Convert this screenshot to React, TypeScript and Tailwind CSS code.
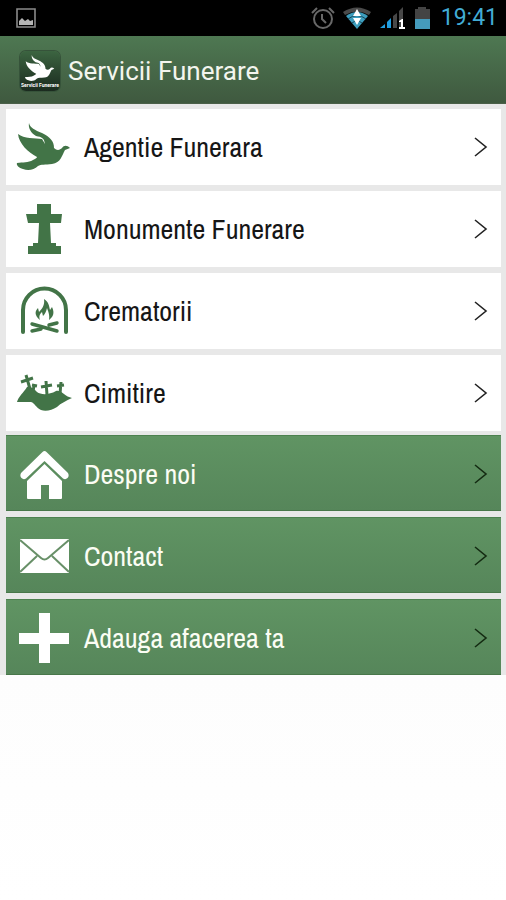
import type { ReactNode } from 'react';

interface MenuItem {
  title: string;
  href: string;
  icon: ReactNode;
}

function DoveShape() {
  return (
    <path d="M13 2C14 7 19 9 26 12C34 16 38 20 38 27C41 30 44 29 46 27C48 24 51 24 54 27L49 29C46 34 45 42 36 43C29 44 25 43 22 45C18 49 12 50 7 48C3 47 0 44 1 42C7 41 12 42 17 39C19 38 21 37 21 36C12 31 3 23 2 13C8 18 19 17 26 18L29 23C28 17 26 16 20 15C15 12 12 7 13 2Z" />
  );
}

const whiteItems: MenuItem[] = [
  {
    title: 'Agentie Funerara',
    href: '#agentie',
    icon: (
      <svg viewBox="0 0 56 52" className="h-[52px] w-14" fill="#427447">
        <DoveShape />
      </svg>
    ),
  },
  {
    title: 'Monumente Funerare',
    href: '#monumente',
    icon: (
      <svg viewBox="0 0 56 52" className="h-[52px] w-14" fill="#427447">
        <path d="M21 1H35V11H46L45 20H34L35 40H40V43H45V51H12V43H17V40H22L23 20H12L10 11H21Z" />
      </svg>
    ),
  },
  {
    title: 'Crematorii',
    href: '#crematorii',
    icon: (
      <svg viewBox="0 0 56 52" className="h-[52px] w-14" fill="none" stroke="#427447" strokeLinecap="round">
        <path d="M7 47V25A21.5 21.5 0 0 1 50 25V47" strokeWidth="4" />
        <path d="M16 39L41 46M16 46L25 44M33 40L41 38" strokeWidth="3.4" />
        <path
          d="M24 35C18 30 19 26 22 23L23 27C26 24 29 20 28 14C33 17 33 21 34 25L36 22C39 28 37 32 33 35C34 30 32 26 31 23C30 27 29 29 27 31L26 27C23 30 23 32 24 35Z"
          fill="#427447"
          stroke="none"
        />
      </svg>
    ),
  },
  {
    title: 'Cimitire',
    href: '#cimitire',
    icon: (
      <svg viewBox="0 0 56 52" className="h-[52px] w-14" fill="#427447">
        <path d="M1 35C2 30 8 25 11 20C15 19 18 22 21 25C25 28 33 28 40 24C44 23 46 26 48 27C50 29 53 30 56 31C50 34 45 36 41 40C36 43 30 45 25 43C20 41 19 36 15 35H1Z" />
        <path
          d="M10 8L14 22M5 15L17 11M30 14L31 28M25 20L36 18M45 15L44 27M41 19L48 18M18 19L17 24M16 18L21 19"
          fill="none"
          stroke="#427447"
          strokeWidth="3"
        />
      </svg>
    ),
  },
];

const greenItems: MenuItem[] = [
  {
    title: 'Despre noi',
    href: '#despre',
    icon: (
      <svg viewBox="0 0 56 52" className="h-[52px] w-14" fill="#fff">
        <path d="M28.5 16L46 33V50Q46 51 45 51H33V37H25V51H12Q11 51 11 50V33Z" />
        <path d="M26.500 4Q28.500 2 30.500 4L52 25Q53.500 28 51.500 30Q49.500 32 47 30.500L28.500 13L10 30.500Q7.500 32 5.500 30Q3.500 28 5 25Z" />
      </svg>
    ),
  },
  {
    title: 'Contact',
    href: '#contact',
    icon: (
      <svg viewBox="0 0 56 52" className="h-[52px] w-14" fill="none">
        <path d="M4 9H53V43H4Z" fill="#fff" />
        <path d="M4 10L25 28Q28.500 31 32 28L53 10M4 42L21 26M53 42L36 26" stroke="#689068" strokeWidth="2" />
      </svg>
    ),
  },
  {
    title: 'Adauga afacerea ta',
    href: '#adauga',
    icon: (
      <svg viewBox="0 0 56 52" className="h-[52px] w-14" fill="#fff">
        <path d="M23 1H34V21H53V32H34V51H23V32H3V21H23Z" />
      </svg>
    ),
  },
];

function StatusBar() {
  return (
    <div className="flex h-9 items-center justify-between bg-black pr-2 pl-4">
      <svg viewBox="0 0 20 20" className="h-5 w-5" fill="none">
        <path d="M1 1H19V19H1Z" stroke="#8a8a8a" strokeWidth="1.6" />
        <path d="M3 17V13L6 10L9 13L12 11L14 13L17 12V17Z" fill="#b5b5b5" />
      </svg>
      <div className="flex items-center gap-2">
        {/* alarm */}
        <svg viewBox="0 0 24 24" className="h-6 w-6" fill="none" stroke="#686868" strokeWidth="2">
          <circle cx="12" cy="13" r="9" />
          <path d="M11 8V13L15 17M1 7L6 2M23 7L18 2" />
        </svg>
        {/* wifi */}
        <svg viewBox="0 0 28 24" className="h-6 w-7">
          <path d="M0 6Q14 -3 28 6L26 9Q14 2 2 9Z" fill="#4a4a4a" />
          <path d="M3 10Q14 2 25 10L14 23Z" fill="#3d9dbd" />
          <path d="M5 13Q14 6 23 13M9 17Q14 13 19 17" fill="none" stroke="#17475a" />
          <path d="M14 3L18 10H10ZM14 19L18 12H10Z" fill="#fff" />
        </svg>
        {/* signal */}
        <svg viewBox="0 0 26 24" className="h-6 w-[26px]">
          <path d="M1 22L6 18V22ZM8 16L12 12V22H8Z" fill="#209ee0" />
          <path d="M14 10L18 7V22H14ZM20 5L24 1V22H20Z" fill="#484848" />
          <path d="M20 15L23 13H24V21H26V23H20V21H22V16H20Z" fill="#fff" />
        </svg>
        {/* battery */}
        <svg viewBox="3 0 20 24" className="h-6 w-5">
          <path d="M5 3H8V1H16V3H20V14H5Z" fill="#444" />
          <path d="M5 13H20V23H5Z" fill="#459bbc" />
        </svg>
        <span className="font-[Roboto,sans-serif] text-[23px] leading-6 text-[#42acd5]">19:41</span>
      </div>
    </div>
  );
}

function Header() {
  return (
    <header className="flex h-[68px] items-center gap-2 border-b border-[#4b6049] bg-linear-to-b from-[#4e7852] to-[#3f593f] pt-0.5 pl-5">
      <div className="flex h-10 w-10 flex-col items-center justify-center rounded-md bg-linear-to-b from-[#3c6541] to-[#1b2b1f] ring-1 ring-[#36533a]">
        <svg viewBox="0 0 56 51" className="h-7 w-8" fill="#fff">
          <DoveShape />
        </svg>
        <span className="font-[Roboto,sans-serif] text-[5px] leading-[6px] font-bold text-white">Servicii Funerare</span>
      </div>
      <h1 className="font-[Roboto,sans-serif] text-[26px] leading-8 text-[#f3f5ee]">Servicii Funerare</h1>
    </header>
  );
}

function MenuRow({ item, green }: { item: MenuItem; green?: boolean }) {
  return (
    <li>
      <a
        href={item.href}
        className={
          green
            ? 'flex h-[76px] items-center gap-3 border-y border-t-[#4d8150] border-b-[#48774a] bg-linear-to-b from-[#609463] to-[#56865a] pt-0.5 pr-3 pl-2.5 text-[#fbfdf4]'
            : 'flex h-[76px] items-center gap-3 bg-white pr-3 pl-2.5 text-[#161616]'
        }
      >
        {item.icon}
        <span className="flex-1 font-['Liberation_Sans_Narrow','Archivo_Narrow',Roboto,sans-serif] text-[28px] leading-8">
          {item.title}
        </span>
        <svg viewBox="0 0 18 24" className="h-6 w-[18px]" fill="none" stroke={green ? '#142b12' : '#222'} strokeWidth="1.600">
          <path d="M4 3L15 12L4 21" />
        </svg>
      </a>
    </li>
  );
}

export default function App() {
  return (
    <div className="min-h-screen bg-linear-to-b from-[#f7f7f7] to-white">
      <StatusBar />
      <Header />
      <nav className="flex flex-col gap-1 bg-[#e8e8e8] pt-[5px] pr-[5px] pl-1.5">
        <ul className="flex flex-col gap-1.5">
          {whiteItems.map((item) => (
            <MenuRow key={item.title} item={item} />
          ))}
        </ul>
        <ul className="flex flex-col gap-1.5">
          {greenItems.map((item) => (
            <MenuRow key={item.title} item={item} green />
          ))}
        </ul>
      </nav>
    </div>
  );
}
